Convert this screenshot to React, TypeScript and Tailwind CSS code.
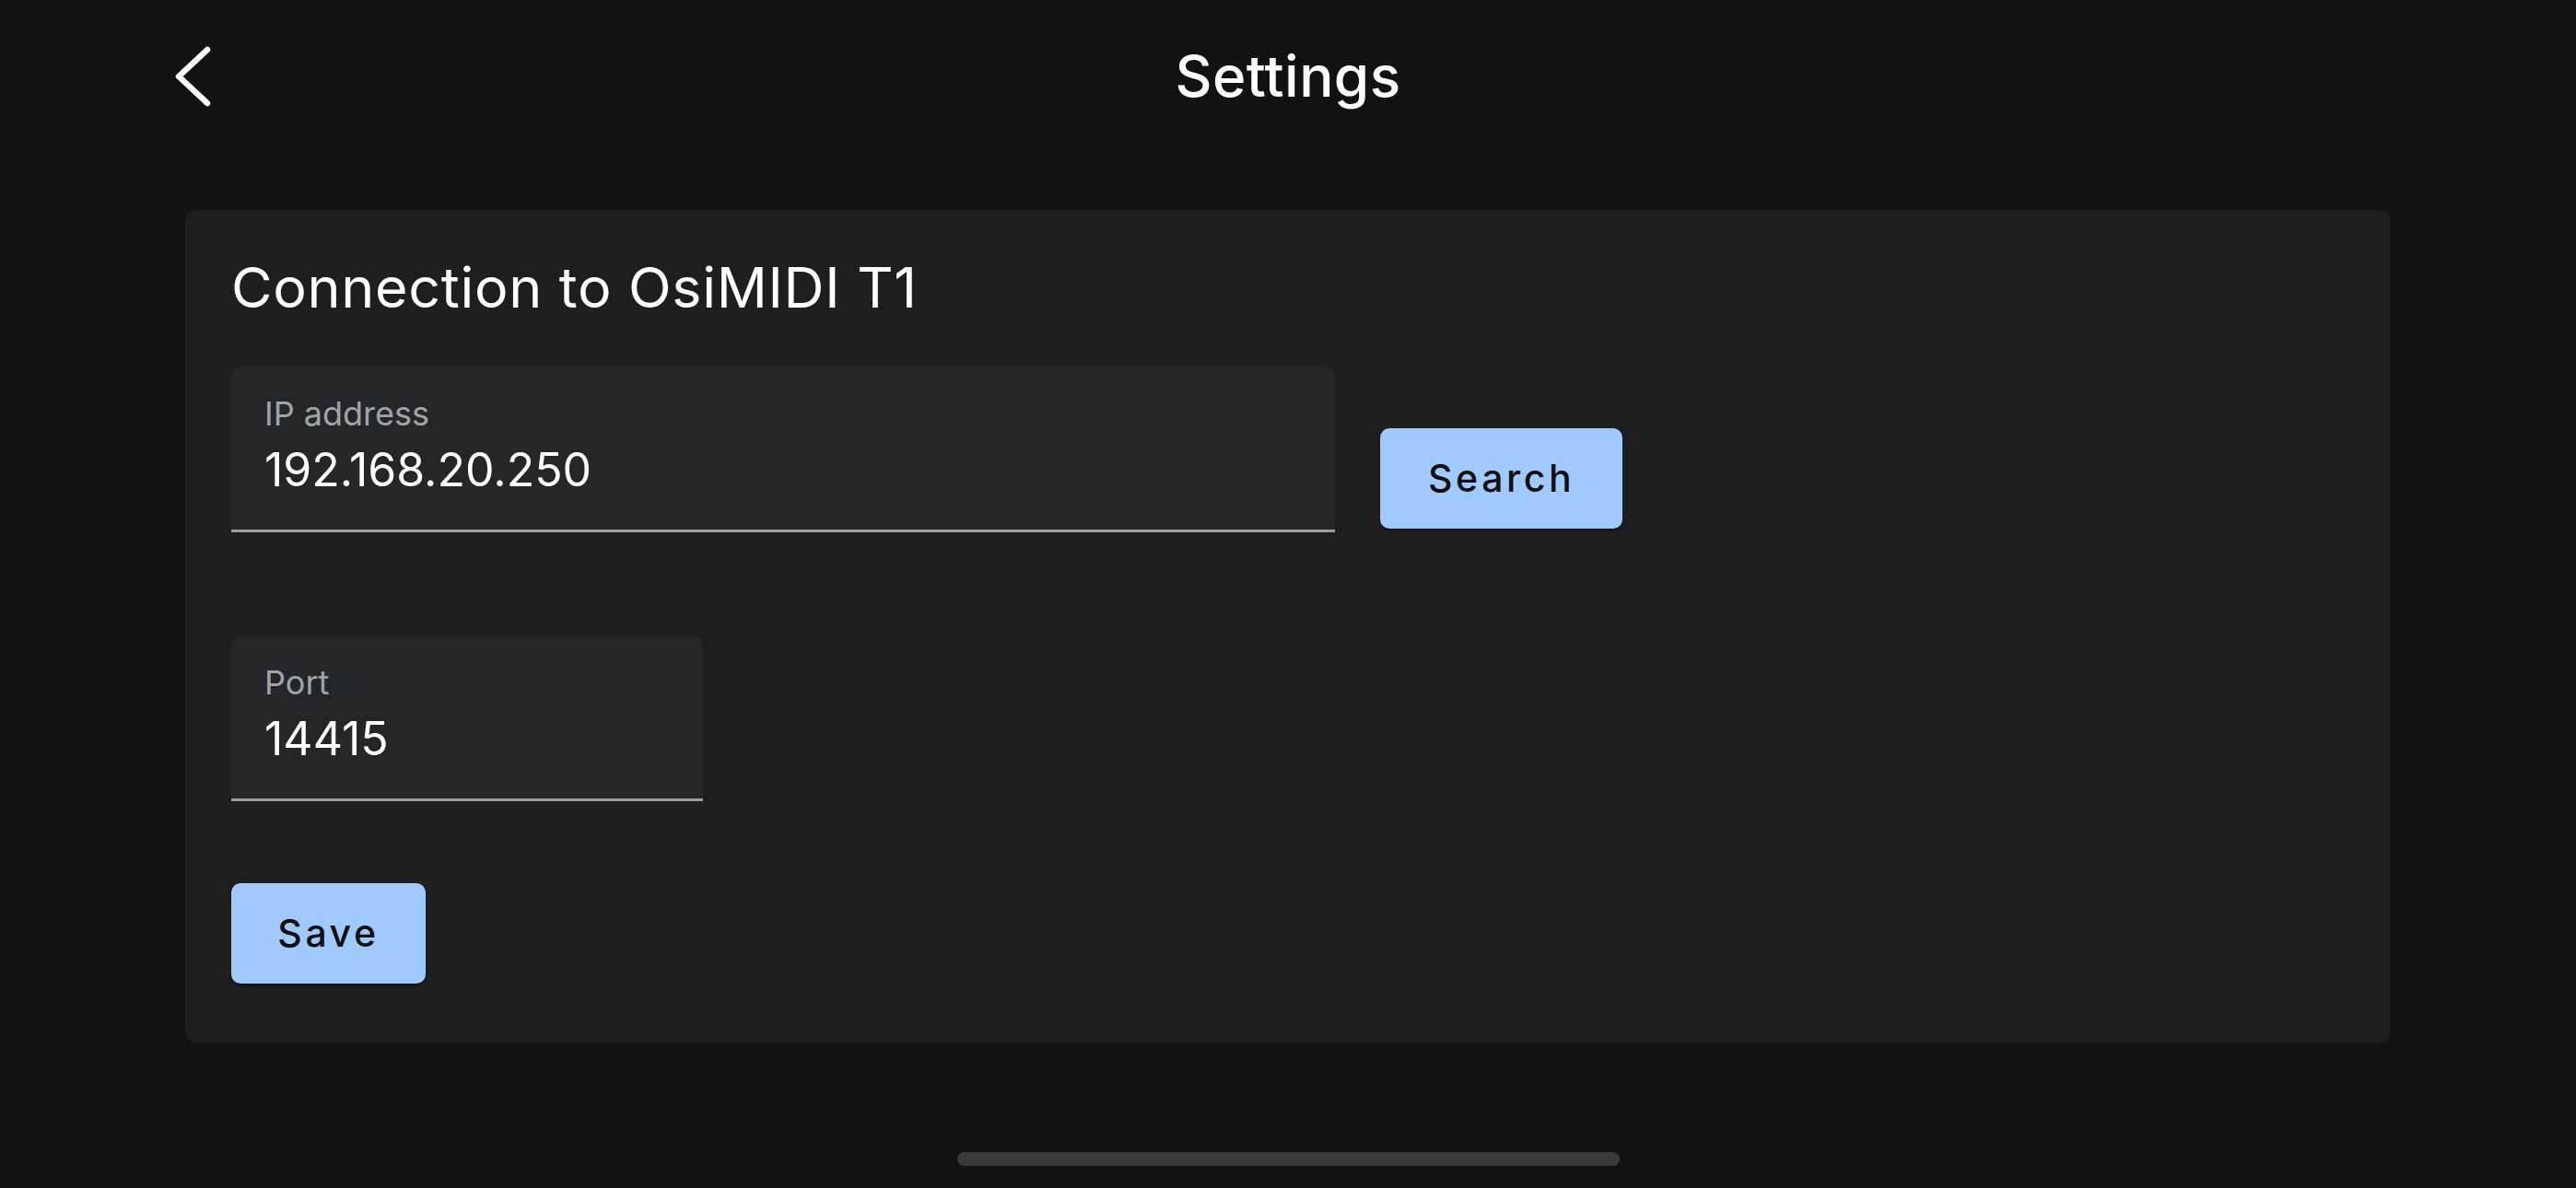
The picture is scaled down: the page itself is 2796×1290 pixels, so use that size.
import { ReactNode } from "react";

function Campo({ label, value, ancho }: { label: string; value: string; ancho: string }) {
  return (
    <div
      className={`${ancho} h-[180px] box-border rounded-t-[12px] bg-[#24272a] border-b-[3px] border-[#9e9e9e] pl-[36px] pt-[30px] flex flex-col`}
    >
      <span className="text-[36px] leading-[43px] text-[#a3a3a3]">{label}</span>
      <span className="mt-[9px] text-[50px] leading-[60px] text-white">{value}</span>
    </div>
  );
}

function Boton({ children, className = "" }: { children: ReactNode; className?: string }) {
  return (
    <button
      className={`h-[109px] rounded-[10px] bg-[#a0cafd] text-[41px] font-medium tracking-[3.6px] text-[#101010] shadow-[0_2px_3px_rgba(0,0,0,0.4)] ${className}`}
    >
      {children}
    </button>
  );
}

export default function App() {
  return (
    <div className="w-[2796px] h-[1290px] bg-[#121212] flex flex-col font-['Inter',sans-serif]">
      {/* Cabecera */}
      <header className="grid grid-cols-[1fr_auto_1fr] items-center px-[188px] pt-[46px]">
        <div className="flex items-center">
          <svg width="44" height="68" viewBox="0 0 44 68" fill="none">
            <polyline
              points="37,5 6,34 37,63"
              stroke="white"
              strokeWidth="6.5"
              strokeLinecap="round"
              strokeLinejoin="round"
            />
          </svg>
        </div>
        <h1 className="text-[62px] leading-[74px] font-medium tracking-[0.4px] text-white">Settings</h1>
        <div />
      </header>

      {/* Tarjeta de conexión */}
      <main className="mx-[201px] mt-[108px] rounded-[12px] bg-[#1e1e1e] pl-[50px] pt-[48px] pb-[64px]">
        <h2 className="text-[61px] leading-[72px] tracking-[0.7px] text-white">Connection to OsiMIDI T1</h2>

        <div className="mt-[50px] flex items-start gap-[49px]">
          <Campo label="IP address" value="192.168.20.250" ancho="w-[1198px]" />
          <Boton className="mt-[67px] px-[52px]">Search</Boton>
        </div>

        <div className="mt-[112px]">
          <Campo label="Port" value="14415" ancho="w-[512px]" />
        </div>

        <Boton className="mt-[89px] w-[211px]">Save</Boton>
      </main>

      <div className="mt-auto mb-[24px] mx-auto w-[719px] h-[15px] rounded-full bg-[#3a3a3a]" />
    </div>
  );
}
